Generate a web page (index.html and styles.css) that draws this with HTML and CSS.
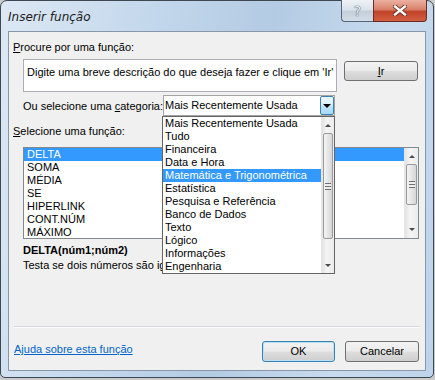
FILE: index.html
```html
<!DOCTYPE html>
<html lang="pt">
<head>
  <meta charset="UTF-8">
  <title>Inserir função</title>
  <link rel="stylesheet" href="styles.css">
</head>
<body>
  <div class="window">
    <div class="titlebar">
      <span class="title">Inserir função</span>
      <div class="caption-btns">
        <div class="cap help">?</div>
        <div class="cap close">
          <svg width="14" height="11" viewBox="0 0 14 11">
            <path d="M2 1.5 L12 9.5 M12 1.5 L2 9.5" stroke="#5a2418" stroke-width="4" stroke-linecap="square"/>
            <path d="M2 1.5 L12 9.5 M12 1.5 L2 9.5" stroke="#fff" stroke-width="2.4" stroke-linecap="square"/>
          </svg>
        </div>
      </div>
    </div>

    <div class="client">
      <div class="label-main"><u>P</u>rocure por uma função:</div>

      <div class="search-row">
        <div class="textbox">Digite uma breve descrição do que deseja fazer e clique em 'Ir'</div>
        <div class="btn btn-ir"><u>I</u>r</div>
      </div>

      <div class="category-row">
        <span class="category-label">Ou selecione uma <u>c</u>ategoria:</span>
        <div class="combo">
          <span class="combo-text">Mais Recentemente Usada</span>
          <span class="combo-arrow"><span class="tri-down"></span></span>

          <div class="dropdown">
            <ul class="items">
              <li>Mais Recentemente Usada</li>
              <li>Tudo</li>
              <li>Financeira</li>
              <li>Data e Hora</li>
              <li class="sel">Matemática e Trigonométrica</li>
              <li>Estatística</li>
              <li>Pesquisa e Referência</li>
              <li>Banco de Dados</li>
              <li>Texto</li>
              <li>Lógico</li>
              <li>Informações</li>
              <li>Engenharia</li>
            </ul>
            <div class="scrollbar sb-drop">
              <div class="sb-btn"><span class="tri-up"></span></div>
              <div class="sb-track"><div class="sb-thumb"></div></div>
              <div class="sb-btn"><span class="tri-down small"></span></div>
            </div>
          </div>
        </div>
      </div>

      <div class="label-func"><u>S</u>elecione uma função:</div>

      <div class="listbox">
        <ul class="items">
          <li class="sel">DELTA</li>
          <li>SOMA</li>
          <li>MÉDIA</li>
          <li>SE</li>
          <li>HIPERLINK</li>
          <li>CONT.NÚM</li>
          <li>MÁXIMO</li>
        </ul>
        <div class="scrollbar sb-list">
          <div class="sb-btn"><span class="tri-up"></span></div>
          <div class="sb-track"><div class="sb-thumb"></div></div>
          <div class="sb-btn"><span class="tri-down small"></span></div>
        </div>
      </div>

      <div class="signature">DELTA(núm1;núm2)</div>
      <div class="desc">Testa se dois números são iguais.</div>

      <div class="separator"></div>

      <div class="footer">
        <a class="help-link" href="#">Ajuda sobre esta função</a>
        <div class="button-group">
          <div class="btn btn-ok">OK</div>
          <div class="btn btn-cancel">Cancelar</div>
        </div>
      </div>
    </div>
  </div>
</body>
</html>
```

FILE: styles.css
```css
* {
  box-sizing: border-box;
}

html, body {
  margin: 0;
  padding: 0;
}

body {
  width: 435px;
  height: 380px;
  overflow: hidden;
  background: #c9cacb;
  font-family: "Liberation Sans", Arial, sans-serif;
  font-size: 11px;
  color: #000;
}

ul {
  list-style: none;
  margin: 0;
  padding: 0;
}

/* janela */

.window {
  width: 434px;
  height: 378px;
  border: 1px solid #3e4853;
  border-radius: 7px 7px 5px 5px;
  background: linear-gradient(100deg, #dce8f4 0%, #c4d8ec 30%, #b3cbe3 55%, #c8dbee 80%, #bdd3e9 100%);
  display: flex;
  flex-direction: column;
}

.titlebar {
  height: 30px;
  display: flex;
  justify-content: space-between;
  align-items: flex-start;
}

.title {
  margin: 8px 0 0 7px;
  font-family: "DejaVu Sans", sans-serif;
  font-style: italic;
  font-size: 12px;
  line-height: 16px;
  color: #1b1b1b;
}

.caption-btns {
  display: flex;
  margin: -1px 6px 0 0;
}

.cap {
  height: 22px;
  border: 1px solid #56667a;
  border-top: none;
  display: flex;
  align-items: center;
  justify-content: center;
}

.help {
  width: 32px;
  border-right: none;
  border-radius: 0 0 0 4px;
  background: linear-gradient(#eef2f6, #dbe3eb 45%, #c3cfdb 55%, #d3dde7);
  font-family: "DejaVu Sans", sans-serif;
  font-size: 14px;
  color: #eef2f6;
  text-shadow: 0 0 1px #3e4c5c, 0 0 1px #3e4c5c;
}

.close {
  width: 54px;
  border-color: #6e2a1e;
  border-radius: 0 0 4px 0;
  background: linear-gradient(#eab0a2, #d9826a 45%, #c2432a 55%, #d0603f);
}

/* area cliente */

.client {
  flex: 1;
  margin: 0 7px 6px 7px;
  border: 1px solid #8797a9;
  background: #f0f0f0;
}

.label-main {
  margin: 8px 0 0 4px;
  line-height: 15px;
}

.search-row {
  display: flex;
  align-items: flex-start;
  margin: 4px 0 0 14px;
}

.textbox {
  width: 314px;
  height: 33px;
  border: 1px solid #abadb3;
  background: #fff;
  padding: 5px 0 0 3px;
  line-height: 15px;
  white-space: nowrap;
  overflow: hidden;
}

.btn {
  height: 21px;
  border: 1px solid #707070;
  border-radius: 3px;
  background: linear-gradient(#f2f2f2, #ebebeb 48%, #dddddd 52%, #cfcfcf);
  display: flex;
  align-items: center;
  justify-content: center;
  line-height: 15px;
}

.btn-ir {
  width: 74px;
  height: 20px;
  margin: 2px 0 0 7px;
}

.category-row {
  display: flex;
  align-items: center;
  margin: 3px 0 0 14px;
}

.category-label {
  width: 140px;
  white-space: nowrap;
}

.combo {
  position: relative;
  width: 172px;
  height: 21px;
  border: 1px solid #a5a5a5;
  background: #fff;
  display: flex;
}

.combo-text {
  flex: 1;
  padding-left: 1px;
  line-height: 19px;
}

.combo-arrow {
  width: 14px;
  border: 1px solid #3c7fb1;
  border-radius: 2px;
  background: linear-gradient(#eaf6fd, #d9f0fc 48%, #bee6fd 52%, #a7d9f5);
  display: flex;
  align-items: center;
  justify-content: center;
}

.tri-down {
  width: 0;
  height: 0;
  border-left: 4px solid transparent;
  border-right: 4px solid transparent;
  border-top: 4px solid #000;
}

.tri-down.small {
  border-left-width: 3.5px;
  border-right-width: 3.5px;
  border-top: 3px solid #4a4a4a;
}

.tri-up {
  width: 0;
  height: 0;
  border-left: 3.5px solid transparent;
  border-right: 3.5px solid transparent;
  border-bottom: 3px solid #4a4a4a;
}

/* lista suspensa */

.dropdown {
  position: absolute;
  top: 20px;
  left: -2px;
  width: 173px;
  height: 158px;
  border: 1px solid #646464;
  background: #fff;
  display: flex;
  z-index: 5;
}

.items {
  flex: 1;
}

.items li {
  height: 13px;
  line-height: 13px;
  white-space: nowrap;
}

.dropdown .items li {
  padding-left: 2px;
}

.items li.sel {
  background: #3399ff;
  color: #fff;
}

/* barras de rolagem */

.scrollbar {
  display: flex;
  flex-direction: column;
  background: linear-gradient(to right, #e3e3e3, #f4f4f4 40%, #ececec);
  border-left: 1px solid #e6e6e6;
}

.sb-drop {
  width: 13px;
}

.sb-list {
  width: 14px;
}

.sb-btn {
  height: 16px;
  display: flex;
  align-items: center;
  justify-content: center;
}

.sb-track {
  flex: 1;
}

.sb-thumb {
  height: 40px;
  margin: 0 1px;
  border: 1px solid #9a9a9a;
  border-radius: 2px;
  background: linear-gradient(to right, #f4f4f4, #e6e6e6 50%, #d6d6d6);
  display: flex;
  align-items: center;
  justify-content: center;
}

.sb-thumb::after {
  content: "";
  width: 6px;
  height: 7px;
  background: repeating-linear-gradient(#6f6f6f 0, #6f6f6f 1px, #eeeeee 1px, #eeeeee 3px);
}

.sb-drop .sb-thumb {
  height: 106px;
}

.sb-list .sb-thumb {
  height: 41px;
}

.sb-list .sb-btn:last-child {
  height: 18px;
}

/* lista de funcoes */

.label-func {
  margin: 8px 0 0 4px;
  line-height: 15px;
}

.listbox {
  width: 396px;
  height: 92px;
  margin: 8px 0 0 14px;
  border: 1px solid #828790;
  background: #fff;
  display: flex;
}

.listbox .items li {
  padding-left: 3px;
}

.signature {
  margin: 4px 0 0 14px;
  font-weight: bold;
  line-height: 15px;
}

.desc {
  margin-left: 14px;
  line-height: 15px;
}

.separator {
  margin: 53px 5px 0 5px;
  height: 2px;
  border-top: 1px solid #d5d8dc;
  border-bottom: 1px solid #fcfcfc;
}

.footer {
  display: flex;
  justify-content: space-between;
  align-items: flex-start;
  margin: 13px 6px 0 5px;
}

.help-link {
  margin-top: 1px;
  line-height: 15px;
  color: #0066cc;
}

.button-group {
  display: flex;
  gap: 10px;
}

.btn-ok {
  width: 73px;
  border-color: #3c7fb1;
  box-shadow: inset 0 0 0 1px #b6e2f9;
}

.btn-cancel {
  width: 74px;
}
```
